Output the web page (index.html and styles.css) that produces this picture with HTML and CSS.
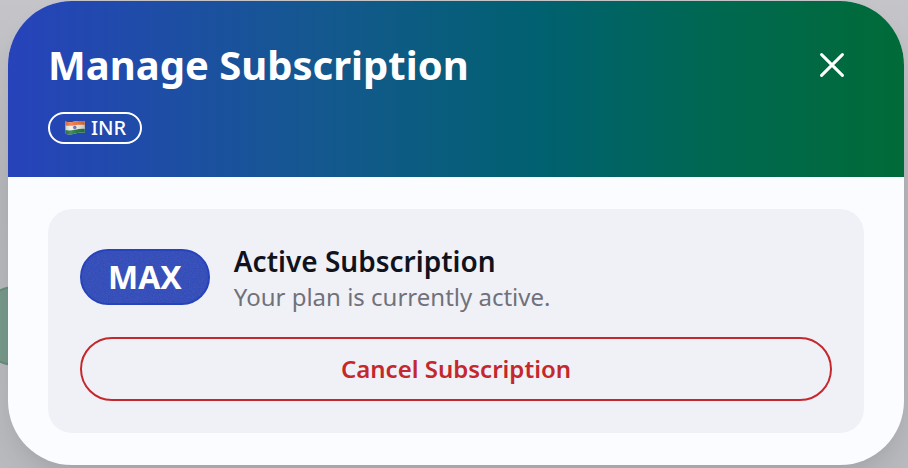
FILE: index.html
```html
<!DOCTYPE html>
<html lang="en">
<head>
  <meta charset="utf-8">
  <meta name="viewport" content="width=device-width, initial-scale=1">
  <title>Manage Subscription</title>
  <link rel="stylesheet" href="styles.css">
</head>
<body>
  <div class="backdrop-button" aria-hidden="true"></div>
  <main class="dialog" role="dialog" aria-labelledby="dialog-title">
    <header class="dialog-header">
      <div class="title-row">
        <h1 class="title" id="dialog-title">Manage Subscription</h1>
        <button class="close" type="button" aria-label="Close">
          <svg width="24" height="24" viewBox="0 0 24 24" fill="none" stroke="currentColor" stroke-width="3" stroke-linecap="round">
            <path d="M1.6 1.6 22.4 22.4M22.4 1.6 1.6 22.4"/>
          </svg>
        </button>
      </div>
      <span class="currency">
        <svg class="flag" width="21" height="16" viewBox="-1 0 21 16" aria-hidden="true">
          <defs>
            <clipPath id="flag-shape">
              <path d="M.2 1.6C3.500 2.900 6.500 2.200 10 1.500S17 .9 19.800 1.300V12.700C16.500 12.200 13.500 12.600 10 13.500S3.500 14.800 .6 13.800Z"/>
            </clipPath>
            <linearGradient id="flag-shade">
              <stop offset="0" stop-color="#000" stop-opacity=".16"/>
              <stop offset=".3" stop-color="#fff" stop-opacity=".12"/>
              <stop offset=".65" stop-color="#000" stop-opacity=".06"/>
              <stop offset="1" stop-color="#000" stop-opacity=".2"/>
            </linearGradient>
          </defs>
          <g clip-path="url(#flag-shape)">
            <path fill="#f3f1ee" d="M0 0h20v16H0z"/>
            <path fill="#f47b42" d="M0 0h20v5C16.500 4.600 13.500 4.600 10 5.200S3.500 6.200 0 5.400Z"/>
            <path fill="#2c8148" d="M0 10c3.500.8 6.500.4 10-.2s6.500-1.200 10-.8V16H0Z"/>
            <path fill="url(#flag-shade)" d="M0 0h20v16H0z"/>
          </g>
          <circle cx="9.800" cy="7.500" r="1.400" fill="#7777bd" stroke="#5a5ba8" stroke-width=".5"/>
        </svg>
        <span>INR</span>
      </span>
    </header>
    <div class="dialog-body">
      <section class="panel">
        <div class="plan">
          <span class="plan-badge">
            <svg class="grain" width="100%" height="100%" aria-hidden="true">
              <filter id="noise" x="0" y="0" width="100%" height="100%">
                <feTurbulence type="fractalNoise" baseFrequency=".8" numOctaves="3"/>
                <feColorMatrix type="saturate" values="0"/>
              </filter>
              <rect width="100%" height="100%" filter="url(#noise)"/>
            </svg>
            <span class="plan-name">MAX</span>
          </span>
          <div>
            <h2 class="plan-title">Active Subscription</h2>
            <p class="plan-note">Your plan is currently active.</p>
          </div>
        </div>
        <button class="cancel" type="button">Cancel Subscription</button>
      </section>
    </div>
  </main>
</body>
</html>
```

FILE: styles.css
```css
* {
  box-sizing: border-box;
}

body {
  margin: 0;
  min-height: 100vh;
  padding: 1px 4px 3px 8px;
  overflow: hidden;
  background: linear-gradient(#c5c5c9, #b5b6ba 40%, #b9babe);
  font-family: "Noto Sans", sans-serif;
}

h1,
h2,
p {
  margin: 0;
}

button {
  font: inherit;
  cursor: pointer;
}

/* Page control showing behind the dialog edge */
.backdrop-button {
  position: absolute;
  left: -24px;
  top: 286px;
  width: 112px;
  height: 80px;
  border: 2px solid #668d7c;
  border-radius: 40px;
  background: #769889;
}

.dialog {
  position: relative;
  overflow: hidden;
  border-radius: 64px;
  background: #fbfcff;
  box-shadow: 0 16px 32px -12px rgb(0 0 0 / 18%);
}

.dialog-header {
  padding: 40px 40px 33px;
  color: #fff;
  background: linear-gradient(90deg, #2743bb, #14588f 35%, #00616f 60%, #00684f 80%, #006b38);
}

.title-row {
  display: flex;
  align-items: center;
  justify-content: space-between;
  margin-bottom: 23px;
}

.title {
  font-size: 40px;
  font-weight: 700;
  line-height: 48px;
}

.close {
  display: grid;
  place-items: center;
  width: 64px;
  height: 48px;
  padding: 0;
  border: 0;
  background: none;
  color: inherit;
}

.currency {
  display: flex;
  align-items: center;
  gap: 6px;
  width: fit-content;
  height: 32px;
  padding: 0 14px;
  border: 2px solid #fff;
  border-radius: 16px;
  font-size: 20px;
  font-weight: 500;
  line-height: 28px;
}

.dialog-body {
  padding: 32px 40px;
}

.panel {
  padding: 32px;
  border-radius: 24px;
  background: #f0f1f6;
}

.plan {
  display: flex;
  align-items: center;
  gap: 24px;
  margin-bottom: 24px;
}

.plan-badge {
  position: relative;
  overflow: hidden;
  padding: 6px 26px;
  border: 2px solid #2743bb;
  border-radius: 28px;
  background: #2d48ba;
  color: #fff;
  font-size: 32px;
  font-weight: 700;
  line-height: 40px;
}

.grain {
  position: absolute;
  inset: 0;
  opacity: 0.15;
}

.plan-name {
  position: relative;
}

.plan-title {
  color: #10131c;
  font-size: 28px;
  font-weight: 600;
  line-height: 40px;
}

.plan-note {
  color: #70717a;
  font-size: 24px;
  line-height: 32px;
}

.cancel {
  display: block;
  width: 100%;
  padding: 14px 24px;
  border: 2px solid #c4282d;
  border-radius: 32px;
  background: none;
  color: #c4282d;
  font-size: 24px;
  font-weight: 600;
  line-height: 32px;
}
```
